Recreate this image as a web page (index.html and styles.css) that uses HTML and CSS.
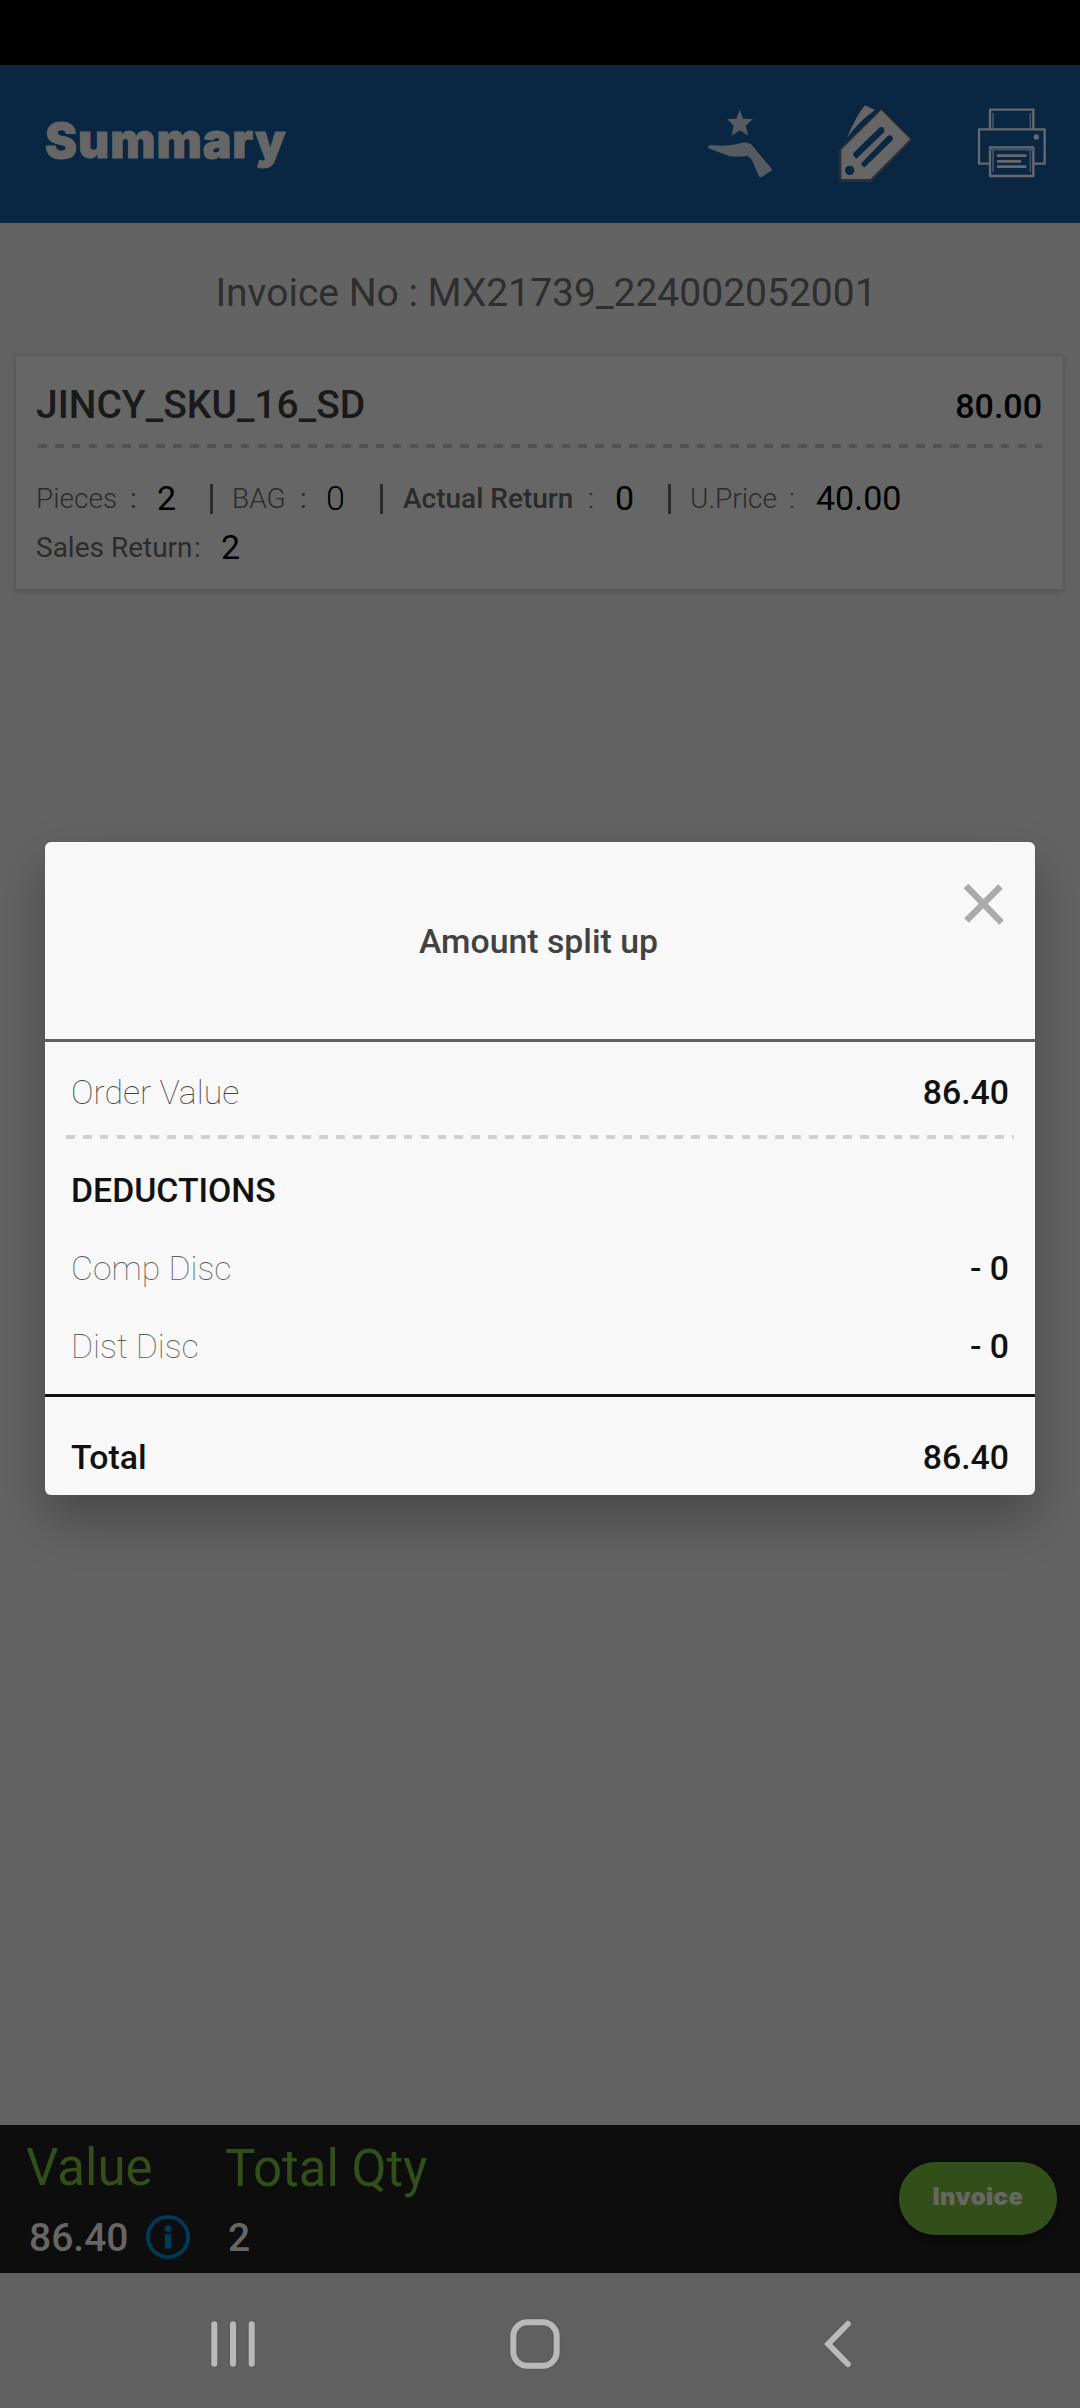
FILE: index.html
```html
<!DOCTYPE html>
<html lang="en">
<head>
<meta charset="utf-8">
<title>Summary</title>
<link rel="stylesheet" href="styles.css">
</head>
<body>
<div class="screen">
  <div class="status-bar"></div>
  <header class="app-bar">
    <h1 class="app-title">Summary</h1>
    <div class="actions">
      <svg class="icon-offer" width="66" height="70" viewBox="143 176 198 210">
        <path d="M241 178l10 27 30 1-22 20 8 30-26-16-24 16 6-30-20-20 28-1z"/>
        <path d="M145 290q4-8 20-5 34 4 66-3 16-8 34-5 10 2 16 11l57 69v3l-33 21-6-2-19-45q-6-14-18-17-22 4-50 1l-61-23q-6-1-6-5z"/>
      </svg>
      <svg class="icon-tag" width="76" height="80" viewBox="535 162 228 240">
        <path class="tag-shadow" d="M541 300L665 180 754 269 633 393H541z"/>
        <path class="tag-fill" d="M616 166l30 14q-46 32-83 82 28-68 53-96z"/>
        <path class="tag-fill" fill-rule="evenodd" d="M545 299L665 181 751 268 632 388H545zM582 308q-4 5 0 10l8 8 84-80q2-8-4-14-8-3-12 2zM605 340q0 8 10 12l84-82q3-6-3-12-6-4-12 0zM570 347a14 14 0 1 0 .1 0z"/>
      </svg>
      <svg class="icon-print" width="70" height="70" viewBox="952 175 210 210">
        <path d="M991 237V180H1121V237M991 342H958V239H1155V342H1121M991 293H1121V379H991z"/>
        <path class="print-inner" d="M1000 237V190M1112 237V190M1000 300V368M1112 300V368M988 300H1124"/>
        <path class="print-lines" d="M1012 318H1100M1012 335H1084M1012 351H1100"/>
        <circle cx="1130" cy="262" r="8"/>
      </svg>
    </div>
  </header>

  <main class="content">
    <div class="invoice-no">Invoice No : MX21739_224002052001</div>
    <section class="card">
      <div class="card-head">
        <span class="sku">JINCY_SKU_16_SD</span>
        <span class="amount">80.00</span>
      </div>
      <div class="dashes card-dashes"></div>
      <div class="fields">
        <div class="field pieces"><span class="label light">Pieces</span><span class="colon">:</span><span class="value">2</span></div>
        <div class="field bag"><span class="label light">BAG</span><span class="colon">:</span><span class="value light">0</span></div>
        <div class="field actual"><span class="label medium">Actual Return</span><span class="colon light">:</span><span class="value">0</span></div>
        <div class="field price"><span class="label light">U.Price</span><span class="colon light">:</span><span class="value">40.00</span></div>
      </div>
      <div class="fields">
        <div class="field sales"><span class="label">Sales Return</span><span class="colon">:</span><span class="value">2</span></div>
      </div>
    </section>
  </main>

  <footer class="totals">
    <div class="total value-total">
      <span class="total-label">Value</span>
      <div class="total-figure">
        <span>86.40</span>
        <svg class="icon-info" width="44" height="44" viewBox="0 0 44 44">
          <circle class="ring" cx="22" cy="22" r="20.1"/>
          <circle cx="22" cy="13.7" r="3.4"/>
          <rect x="18.8" y="19" width="6.3" height="14.6"/>
        </svg>
      </div>
    </div>
    <div class="total">
      <span class="total-label qty">Total Qty</span>
      <div class="total-figure">2</div>
    </div>
    <button class="invoice-btn">Invoice</button>
  </footer>

  <nav class="nav-bar">
    <svg width="46" height="52" viewBox="0 0 46 52"><path d="M4.3 6.2V45.8M23 6.2V45.8M41.7 6.2V45.8"/></svg>
    <svg class="home" width="52" height="52" viewBox="0 0 52 52"><rect x="4.3" y="4.3" width="43.4" height="43.4" rx="14"/></svg>
    <svg width="32" height="52" viewBox="0 0 32 52"><path d="M26.8 6L7.2 26 26.8 46"/></svg>
  </nav>

  <div class="dialog">
    <div class="dialog-head">
      <span>Amount split up</span>
      <svg class="icon-close" width="44" height="44" viewBox="0 0 44 44"><path d="M4 4L39.500 40.500M38.500 4.500L4.500 38.500"/></svg>
    </div>
    <div class="row order"><span class="thin">Order Value</span><span>86.40</span></div>
    <div class="dashes dialog-dashes"></div>
    <div class="deductions">
      <div class="row"><span>DEDUCTIONS</span></div>
      <div class="row"><span class="thin faint">Comp Disc</span><span>- 0</span></div>
      <div class="row"><span class="thin faint">Dist Disc</span><span>- 0</span></div>
    </div>
    <div class="row grand"><span>Total</span><span>86.40</span></div>
  </div>
</div>
</body>
</html>
```
FILE: styles.css
```css
* { box-sizing: border-box; }

body {
  margin: 0;
  background: #636363;
  font-family: Roboto, "Liberation Sans", sans-serif;
}

.screen {
  position: relative;
  display: flex;
  flex-direction: column;
  width: 1080px;
  height: 2408px;
  overflow: hidden;
}

.status-bar { height: 65px; background: #000; }

.app-bar {
  display: flex;
  justify-content: space-between;
  height: 158px;
  padding: 0 33px 0 45px;
  background: #092643;
}

.app-title {
  margin: 0;
  color: #666;
  font: 900 48px/151px Inter, Roboto, sans-serif;
  letter-spacing: 1px;
  -webkit-text-stroke: 1px #666;
}

.actions { display: flex; align-items: flex-start; }
.actions svg { display: block; }

.icon-offer { margin: 44px 65px 0 0; fill: #555b62; }
.icon-tag { margin: 39px 63px 0 0; }
.tag-shadow { fill: none; stroke: #333; stroke-width: 5; }
.tag-fill { fill: #666; }
.icon-print { margin-top: 43px; fill: none; stroke: #666a6e; stroke-width: 7; stroke-linejoin: round; }
.icon-print .print-inner { stroke: #41546a; stroke-width: 5; }
.icon-print .print-lines { stroke-width: 8; }
.icon-print circle { fill: #666a6e; stroke: none; }

.content { flex: 1; }

.invoice-no {
  display: flex;
  align-items: center;
  justify-content: center;
  height: 133px;
  padding: 7px 0 0 12px;
  color: #2e2e2e;
  font-size: 39px;
}

.card {
  height: 233px;
  margin: 0 17px 0 16px;
  padding: 10px 21px 0 20px;
  background: #666;
  box-shadow: 0 0 2px 1px #575757, 0 3px 6px #555;
}

.card-head {
  display: flex;
  align-items: baseline;
  justify-content: space-between;
  height: 78px;
  line-height: 78px;
  font-weight: 500;
}
.sku { color: #1a1a1a; font-size: 39px; }
.amount { color: #000; font-size: 34px; }

.dashes {
  height: 4px;
  background: repeating-linear-gradient(90deg, #525252 0 8.7px, transparent 8.7px 16.89px);
}
.card-dashes { margin: 0 0 26px 2px; }

.fields { display: flex; height: 49px; }
.field { display: flex; align-items: center; color: #2b2b2b; font-size: 28px; }
.field + .field::before {
  content: "";
  width: 3px;
  height: 30px;
  margin-right: 19px;
  background: #2b2b2b;
}
.field + .actual::before { margin-right: 20px; }
.value { padding-bottom: 1px; color: #000; font-size: 34px; }
.light { font-weight: 300; }
.medium { font-weight: 500; }

.pieces { width: 174px; }
.pieces .label { width: 94px; }
.pieces .colon { width: 27px; }
.bag { width: 170px; }
.bag .label { width: 68px; }
.bag .colon { width: 26px; }
.actual { width: 288px; }
.actual .label { width: 185px; }
.actual .colon { width: 27px; }
.price .label { width: 99px; }
.price .colon { width: 27px; }
.sales .label { width: 158px; }
.sales .colon { width: 27px; }

.totals {
  display: flex;
  height: 148px;
  background: #0d0d0d;
}
.total { display: flex; flex-direction: column; padding-top: 7px; }
.value-total { width: 199px; padding-left: 26px; }
.total-label { height: 71px; color: #334f19; font-size: 51px; line-height: 71px; }
.total-label.qty { line-height: 73px; }
.total-figure {
  display: flex;
  align-items: center;
  height: 70px;
  padding-left: 3px;
  color: #666;
  font-size: 39px;
  font-weight: 500;
}
.total + .total { padding-left: 26px; }
.icon-info { margin: -3px 0 0 17px; fill: #003a57; }
.icon-info .ring { fill: none; stroke: #003a57; stroke-width: 3.8; }

.invoice-btn {
  width: 158px;
  height: 73px;
  margin: 37px 23px 0 auto;
  padding: 0 0 3px;
  border: 0;
  border-radius: 36px;
  background: #334f19;
  box-shadow: 0 3px 5px #080808;
  color: #666;
  font: 900 24px/1 Inter, Roboto, sans-serif;
  letter-spacing: 0.4px;
}

.nav-bar {
  display: flex;
  align-items: center;
  height: 135px;
  padding: 7px 0 0 210px;
  background: #606060;
}
.nav-bar svg {
  flex: none;
  fill: none;
  stroke: #b9b9b9;
  stroke-width: 6;
  stroke-linecap: round;
  filter: drop-shadow(0 0 1px #555);
}
.nav-bar .home { margin: 0 260px 0 253px; }

.dialog {
  position: absolute;
  left: 45px;
  top: 842px;
  width: 990px;
  height: 653px;
  border-radius: 6px;
  background: #f8f8f8;
  box-shadow: 0 24px 50px rgba(0, 0, 0, 0.28);
  color: #111;
  font-size: 33.8px;
  font-weight: 500;
}
.dialog-head {
  position: relative;
  height: 200px;
  padding-right: 3px;
  border-bottom: 3px solid #616161;
  color: #424242;
  line-height: 200px;
  text-align: center;
}
.icon-close {
  position: absolute;
  top: 40px;
  right: 29px;
  fill: none;
  stroke: #aaa;
  stroke-width: 6.5;
}
.row {
  display: flex;
  justify-content: space-between;
  height: 78px;
  padding: 0 26px;
  line-height: 78px;
}
.row.order { height: 93px; padding-top: 12px; }
.thin { color: #444; font-weight: 100; }
.faint { color: #5c5c5c; }
.dialog-dashes {
  margin: 0 21px 13px;
  background: repeating-linear-gradient(90deg, #d0d0d0 0 8.7px, transparent 8.7px 16.89px);
}
.deductions { height: 242px; }
.row.grand {
  height: 101px;
  padding-top: 22px;
  border-top: 3px solid #111;
}
```
